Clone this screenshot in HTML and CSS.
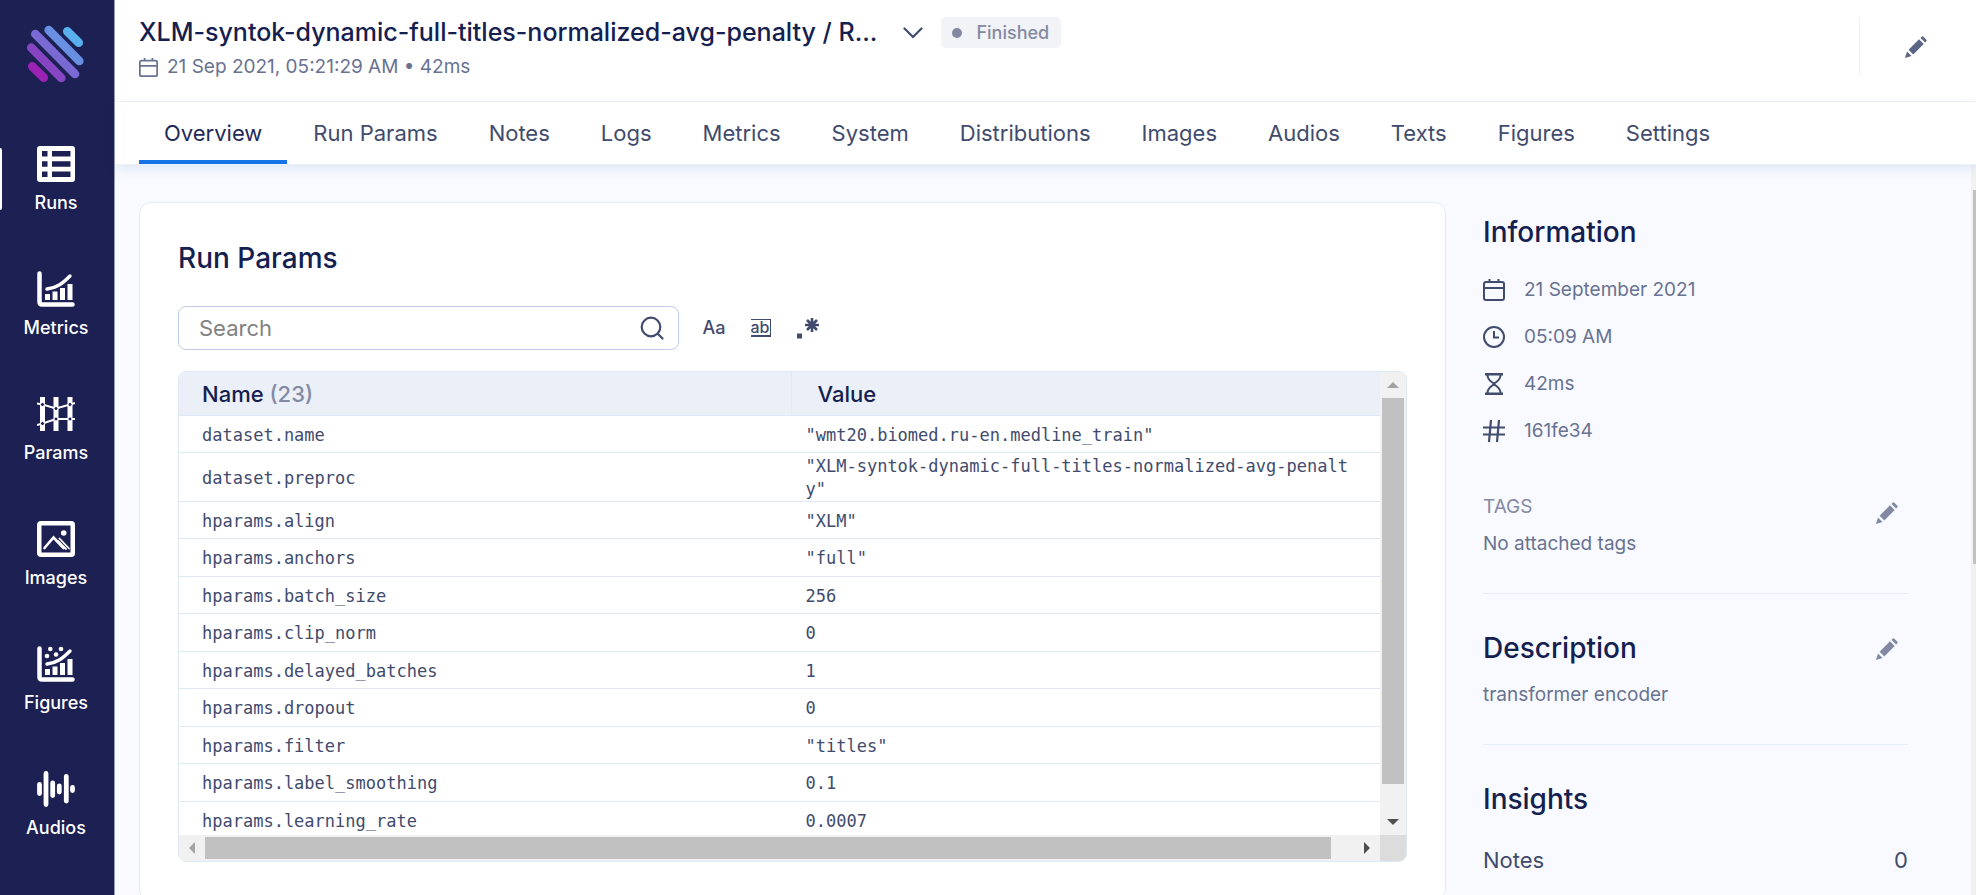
FILE: index.html
```html
<!DOCTYPE html>
<html lang="en">
<head>
<meta charset="utf-8">
<title>Run overview</title>
<link rel="stylesheet" href="styles.css">
</head>
<body>
<svg class="sprite" aria-hidden="true">
  <symbol id="pencil" viewBox="0 0 22 22"><path d="M0 22 L2 15.500 L6.500 20 Z M3.600 13.700 L14 3.300 L18.700 8 L8.300 18.400 Z M15.500 1.900 L16.800 .6 Q17.500 0 18.200 .6 L21.400 3.800 Q22 4.500 21.400 5.200 L20.100 6.500 Z" fill="currentColor"/></symbol>
  <symbol id="calendar" viewBox="0 0 22 22"><path d="M3 3 H19 Q21 3 21 5 V19 Q21 21 19 21 H3 Q1 21 1 19 V5 Q1 3 3 3 Z M1 9 H21 M6.500 0 V3 M15.500 0 V3" fill="none" stroke="currentColor" stroke-width="2"/></symbol>
  <symbol id="chart" viewBox="0 0 38 36"><path d="M2.500 2.500 V31 Q2.500 33.500 5 33.500 H35.500" fill="none" stroke="#fff" stroke-width="4.500" stroke-linecap="round"/><path d="M8 23 h5 v6 h-5z M15.500 20.500 h5 v8.500 h-5z M23 17 h5 v12 h-5z M30.500 13 h5 v16 h-5z" fill="#fff"/><path d="M10 18 C20 17 26 12 33 5" fill="none" stroke="#fff" stroke-width="3.400" stroke-linecap="round"/></symbol>
</svg>

<aside class="sidebar">
  <a class="logo" href="#" aria-label="Home">
    <svg viewBox="27 25 60 60" width="60" height="60" fill="none" stroke-width="8.700" stroke-linecap="round">
      <path d="M68.300 31.300 L79.700 42.700" stroke="#5ab0ee"/>
      <path d="M49.700 30 L80.300 61" stroke="#688fe2"/>
      <path d="M36.300 34 L76 74" stroke="#786ad2"/>
      <path d="M32.300 47.700 L62.300 78" stroke="#8845c3"/>
      <path d="M33.300 66.300 L44.700 77.700" stroke="#9b22b4"/>
    </svg>
  </a>
  <nav class="nav">
    <a class="nav-item active" href="#">
      <svg viewBox="0 0 38 36" width="38" height="36"><path fill="#fff" fill-rule="evenodd" d="M3 0 H35 Q38 0 38 3 V33 Q38 36 35 36 H3 Q0 36 0 33 V3 Q0 0 3 0 Z M5 5 v5.500 h5.500 V5z M15 5 v5.500 h18.500 V5z M5 15.300 v5.500 h5.500 v-5.500z M15 15.300 v5.500 h18.500 v-5.500z M5 25.500 v5.500 h5.500 v-5.500z M15 25.500 v5.500 h18.500 v-5.500z"/></svg>
      <span>Runs</span>
    </a>
    <a class="nav-item" href="#">
      <svg width="38" height="36"><use href="#chart"/></svg>
      <span>Metrics</span>
    </a>
    <a class="nav-item" href="#">
      <svg viewBox="0 0 38 36" width="38" height="36"><path d="M5.500 1 V35 M19 1 V35 M33 1 V35" stroke="#fff" stroke-width="5"/><path d="M0 7.500 L5.500 8.500 L19 12.500 L33 8.500 L38 7 M0 29 L5.500 27.500 L19 23 H38" fill="none" stroke="#fff" stroke-width="2"/><g fill="#1c2052" stroke="#fff"><circle cx="5.500" cy="8.500" r="2"/><circle cx="19" cy="12.500" r="2"/><circle cx="33" cy="8.500" r="2"/><circle cx="5.500" cy="27.500" r="2"/><circle cx="19" cy="23" r="2"/><circle cx="33" cy="23" r="2"/></g></svg>
      <span>Params</span>
    </a>
    <a class="nav-item" href="#">
      <svg viewBox="0 0 38 36" width="38" height="36" fill="none" stroke="#fff"><rect x="2.250" y="2.250" width="33.500" height="31.500" rx="1.500" stroke-width="4.500"/><path d="M7.500 27 L16.500 16.500 L26.500 27" stroke-width="2.600" stroke-linecap="round"/><path d="M22.500 17.500 L32 27.500 M21 20 L29 28" stroke-width="1.800" stroke-linecap="round"/><circle cx="26.700" cy="12" r="2.800" fill="#fff" stroke="none"/></svg>
      <span>Images</span>
    </a>
    <a class="nav-item" href="#">
      <svg viewBox="0 0 38 36" width="38" height="36"><use href="#chart"/><g fill="#fff"><circle cx="10" cy="10" r="2.300"/><circle cx="13.300" cy="3" r="2.300"/><circle cx="19" cy="8.500" r="2.300"/><circle cx="24" cy="3" r="2.300"/></g></svg>
      <span>Figures</span>
    </a>
    <a class="nav-item" href="#">
      <svg viewBox="0 0 38 36" width="38" height="36"><path d="M2.500 13.500 V22.500 M9 2.500 V33.500 M15.700 12 V24.500 M22.300 15 V21 M29.300 5.500 V30 M35.500 16.500 V19.500" stroke="#fff" stroke-width="4.800" stroke-linecap="round"/></svg>
      <span>Audios</span>
    </a>
  </nav>
</aside>

<main class="main">
  <header class="header">
    <div class="heading">
      <div class="title-row">
        <h1 class="title">XLM-syntok-dynamic-full-titles-normalized-avg-penalty / R...</h1>
        <button class="icon-button chevron" aria-label="Select run"><svg viewBox="0 0 20 12" width="20" height="12"><path d="M1.500 1.500 L10 10 L18.500 1.500" fill="none" stroke="currentColor" stroke-width="2.200" stroke-linecap="round"/></svg></button>
        <span class="badge">Finished</span>
      </div>
      <div class="date-row"><svg width="19" height="19"><use href="#calendar"/></svg>21 Sep 2021, 05:21:29 AM • 42ms</div>
    </div>
    <div class="header-actions"><button class="icon-button" aria-label="Edit run"><svg width="22" height="22"><use href="#pencil"/></svg></button></div>
  </header>
  <nav class="tabs">
    <a class="tab selected" href="#">Overview</a>
    <a class="tab" href="#">Run Params</a>
    <a class="tab" href="#">Notes</a>
    <a class="tab" href="#">Logs</a>
    <a class="tab" href="#">Metrics</a>
    <a class="tab" href="#">System</a>
    <a class="tab" href="#">Distributions</a>
    <a class="tab" href="#">Images</a>
    <a class="tab" href="#">Audios</a>
    <a class="tab" href="#">Texts</a>
    <a class="tab" href="#">Figures</a>
    <a class="tab" href="#">Settings</a>
  </nav>

  <div class="body">
    <div class="content">
      <section class="card">
        <h2 class="section-title">Run Params</h2>
        <div class="search-row">
          <label class="search">
            <input type="text" placeholder="Search" aria-label="Search">
            <svg viewBox="0 0 24 24" width="24" height="24" fill="none" stroke="currentColor" stroke-width="2.200" stroke-linecap="round"><circle cx="11" cy="11" r="9.300"/><path d="M17.800 17.800 L22.500 22.500"/></svg>
          </label>
          <button class="icon-button option" aria-label="Match case">Aa</button>
          <button class="icon-button option" aria-label="Match word"><span class="word">ab</span></button>
          <button class="icon-button option" aria-label="Regular expression"><svg viewBox="0 0 24 24" width="24" height="24"><path d="M1 17.500 h5 v5 h-5z" fill="currentColor"/><path d="M16 2 V16 M9 9 H23 M11 4 L21 14 M21 4 L11 14" stroke="currentColor" stroke-width="2.600"/></svg></button>
        </div>
        <div class="grid">
          <div class="viewport">
            <table>
              <thead><tr><th class="name">Name <span class="count">(23)</span></th><th>Value</th></tr></thead>
              <tbody>
                <tr><td>dataset.name</td><td>"wmt20.biomed.ru-en.medline_train"</td></tr>
                <tr><td>dataset.preproc</td><td>"XLM-syntok-dynamic-full-titles-normalized-avg-penalty"</td></tr>
                <tr><td>hparams.align</td><td>"XLM"</td></tr>
                <tr><td>hparams.anchors</td><td>"full"</td></tr>
                <tr><td>hparams.batch_size</td><td>256</td></tr>
                <tr><td>hparams.clip_norm</td><td>0</td></tr>
                <tr><td>hparams.delayed_batches</td><td>1</td></tr>
                <tr><td>hparams.dropout</td><td>0</td></tr>
                <tr><td>hparams.filter</td><td>"titles"</td></tr>
                <tr><td>hparams.label_smoothing</td><td>0.1</td></tr>
                <tr><td>hparams.learning_rate</td><td>0.0007</td></tr>
              </tbody>
            </table>
          </div>
          <div class="bar vertical">
            <span class="arrow up"></span><span class="track"><span class="thumb" style="height:94%"></span></span><span class="arrow down"></span>
          </div>
          <div class="bar horizontal">
            <span class="arrow left"></span><span class="track"><span class="thumb" style="width:98%"></span></span><span class="arrow right"></span>
          </div>
          <div class="corner"></div>
        </div>
      </section>

      <aside class="side">
        <section class="block">
          <h2 class="section-title">Information</h2>
          <ul class="info">
            <li><svg width="22" height="22"><use href="#calendar"/></svg>21 September 2021</li>
            <li><svg viewBox="0 0 22 22" width="22" height="22" fill="none" stroke="currentColor" stroke-width="2"><circle cx="11" cy="11" r="10"/><path d="M11 5 V11.500 H16"/></svg>05:09 AM</li>
            <li><svg viewBox="0 0 22 22" width="22" height="22" fill="none" stroke="currentColor" stroke-width="2"><path d="M2 1.200 H20 M2 20.800 H20" stroke-width="2.400"/><path d="M4.500 2 C4.500 8 10 9 11 11 C12 9 17.500 8 17.500 2 M4.500 20 C4.500 14 10 13 11 11 C12 13 17.500 14 17.500 20"/></svg>42ms</li>
            <li><svg viewBox="0 0 22 22" width="22" height="22" fill="none" stroke="currentColor" stroke-width="2.200"><path d="M0 7.500 H22 M0 14.500 H22 M8 0 L6 22 M16 0 L14 22"/></svg>161fe34</li>
          </ul>
          <div class="tags">
            <div><h3 class="tags-title">TAGS</h3><p class="text">No attached tags</p></div>
            <button class="icon-button muted" aria-label="Edit tags"><svg width="22" height="22"><use href="#pencil"/></svg></button>
          </div>
        </section>
        <section class="block">
          <div class="block-head"><h2 class="section-title">Description</h2><button class="icon-button muted" aria-label="Edit description"><svg width="22" height="22"><use href="#pencil"/></svg></button></div>
          <p class="text">transformer encoder</p>
        </section>
        <section class="block">
          <h2 class="section-title">Insights</h2>
          <a class="insight" href="#"><span>Notes</span><span>0</span></a>
        </section>
      </aside>
    </div>
    <div class="page-bar"><span class="page-thumb"></span></div>
  </div>
</main>
</body>
</html>
```
FILE: styles.css
```css
* { box-sizing: border-box; }
body {
  margin: 0;
  display: flex;
  height: 100vh;
  overflow: hidden;
  font-family: Inter, "Liberation Sans", sans-serif;
  font-size: 18px;
  line-height: 24px;
  color: #414b6d;
  background: #f8faff;
}
h1, h2, h3, p, ul { margin: 0; padding: 0; }
a { color: inherit; text-decoration: none; }
svg { display: block; flex: none; }
.sprite { position: absolute; width: 0; height: 0; }
.icon-button { display: flex; padding: 0; border: 0; background: none; color: #5a6485; cursor: pointer; }
.muted { color: #8489a3; }

.sidebar {
  flex: none;
  width: 115px;
  padding: 25px 2px 0 0;
  background: #1c2052;
  border-right: 1px solid #9a9cb6;
  overflow: hidden;
}
.logo { display: flex; justify-content: center; margin-bottom: 36px; }
.nav-item {
  display: flex;
  flex-direction: column;
  align-items: center;
  gap: 9px;
  height: 125px;
  padding-top: 25px;
  color: #fff;
  font-weight: 500;
}
.nav-item.active { position: relative; }
.nav-item.active::before {
  content: "";
  position: absolute;
  left: 0;
  top: 27px;
  width: 2px;
  height: 62px;
  background: #fff;
  border-radius: 0 2px 2px 0;
}

.main { flex: 1; min-width: 0; display: flex; flex-direction: column; }
.header {
  display: flex;
  justify-content: space-between;
  height: 102px;
  padding: 17px 49px 25px 24px;
  background: #fff;
  border-bottom: 1px solid #f1f3f8;
}
.title-row { display: flex; align-items: center; height: 31px; }
.title { font-size: 25px; line-height: 31px; font-weight: 500; color: #14204f; white-space: nowrap; }
.chevron { margin: 0 18px 0 26px; color: #414b6d; }
.badge {
  display: flex;
  align-items: center;
  gap: 14px;
  height: 31px;
  padding: 0 12px 0 11px;
  border-radius: 5px;
  background: #f2f3f6;
  color: #8489a3;
  font-weight: 500;
}
.badge::before { content: ""; width: 10px; height: 10px; border-radius: 50%; background: #8489a3; }
.date-row { display: flex; align-items: center; gap: 9px; margin-top: 7px; font-size: 19px; color: #687291; }
.header-actions { display: flex; align-items: center; padding-left: 45px; border-left: 1px solid #e8f1fc; }

.tabs {
  position: relative;
  z-index: 1;
  flex: none;
  display: flex;
  gap: 1px;
  height: 63px;
  padding-left: 24px;
  background: #fff;
  border-bottom: 1px solid #e8f1fc;
  box-shadow: 0 4px 12px rgba(0, 82, 155, .1);
}
.tab { padding: 18px 25px 0; font-size: 22px; line-height: 26px; border-bottom: 4px solid transparent; white-space: nowrap; }
.tab.selected { color: #1f2a58; border-color: #1473e6; }

.body { flex: 1; min-height: 0; display: flex; overflow: hidden; }
.content {
  flex: 1;
  min-width: 0;
  display: grid;
  grid-template-columns: minmax(0, 1fr) 425px;
  gap: 37px;
  align-items: start;
  padding: 37px 63px 37px 24px;
}
.card { padding: 38px; background: #fff; border: 1px solid #e4ebf8; border-radius: 12px; }
.section-title { font-size: 28px; line-height: 34px; font-weight: 500; color: #14204f; }
.search-row { display: flex; align-items: center; gap: 23px; margin: 31px 0 21px; }
.search {
  display: flex;
  align-items: center;
  width: 501px;
  height: 44px;
  padding: 0 14px 0 20px;
  border: 1px solid #bdcdea;
  border-radius: 8px;
  color: #414b6d;
}
.search input { flex: 1; min-width: 0; padding: 0; border: 0; outline: 0; font: inherit; font-size: 22px; background: none; }
.search input::placeholder { color: #828282; opacity: 1; }
.option { width: 24px; height: 24px; justify-content: center; align-items: center; color: #414b6d; font: 500 18px/24px Inter, sans-serif; }
.word {
  padding-right: 1px;
  border: solid #414b6d;
  border-width: 1px 1px 2px 0;
  font-size: 16px;
  line-height: 15px;
}

.grid {
  display: grid;
  grid-template: 463px 26px / minmax(0, 1fr) 26px;
  border: 1px solid #dfe8f6;
  border-radius: 8px;
  overflow: hidden;
}
.viewport { overflow: hidden; }
table { width: 100%; border-collapse: separate; border-spacing: 0; table-layout: fixed; }
th {
  height: 44px;
  padding: 0 26px;
  background: #eaeff8;
  border-bottom: 1px solid #dfe8f6;
  font-size: 22px;
  line-height: 26px;
  font-weight: 500;
  text-align: left;
  color: #14204f;
}
th.name { width: 51%; padding: 0 23px; border-right: 1px solid #e4e9f3; }
.count { color: #8489a3; }
td {
  height: 37px;
  padding: 2px 30px 0 14px;
  border-bottom: 1px solid #dfe8f6;
  font: 17px/23px "DejaVu Sans Mono", monospace;
  word-break: break-all;
}
td:first-child { padding-left: 23px; }
tbody tr:nth-child(even) td { height: 38px; }

.bar { display: flex; background: #f1f1f1; }
.vertical { flex-direction: column; }
.arrow { flex: none; width: 26px; height: 26px; display: flex; align-items: center; justify-content: center; }
.arrow::before { content: ""; border: 6px solid transparent; }
.up::before { border-top: 0; border-bottom-color: #a3a3a3; }
.down::before { border-bottom: 0; border-top-color: #505050; }
.left::before { border-left: 0; border-right-color: #a3a3a3; }
.right::before { border-right: 0; border-left-color: #505050; }
.track { flex: 1; display: flex; }
.horizontal .track { padding: 2px 0; }
.vertical .track { padding: 0 2px; }
.thumb { flex: none; width: 22px; height: 22px; background: #c1c1c1; }
.corner { background: #dcdcdc; }

.block { padding-bottom: 37px; margin-bottom: 37px; border-bottom: 1px solid #e3eefb; }
.block:first-child { padding-top: 13px; }
.block:last-child { border: 0; }
.info { list-style: none; display: grid; gap: 23px; margin-top: 29px; }
.info li { display: flex; align-items: center; gap: 19px; font-size: 19px; color: #687291; }
.info svg { color: #414b6d; }
.tags { display: flex; justify-content: space-between; align-items: flex-start; margin-top: 52px; }
.tags .icon-button, .block-head .icon-button { margin: 7px 10px 0 0; }
.tags-title { font-size: 19px; line-height: 24px; font-weight: 400; color: #8489a3; margin-bottom: 13px; }
.text { font-size: 19px; color: #687291; }
.block-head { display: flex; justify-content: space-between; align-items: flex-start; margin-bottom: 18px; }
.insight { display: flex; justify-content: space-between; margin-top: 31px; font-size: 22px; line-height: 26px; }

.page-bar { flex: none; width: 5px; padding: 25px 0 0 2px; background: #f1f1f1; }
.page-thumb { display: block; height: 53%; background: #c1c1c1; }
```
